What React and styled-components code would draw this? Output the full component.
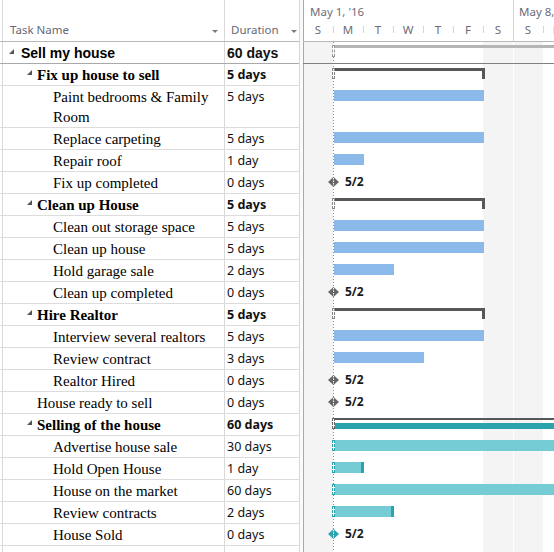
import React from "react";
import styled, { createGlobalStyle, css } from "styled-components";

const DAY = 30;
const MONDAY = 30; // x of Mon May 2 inside the chart

const tasks = [
  { name: "Sell my house", dur: "60 days", level: 0, kind: "project" },
  { name: "Fix up house to sell", dur: "5 days", level: 1, kind: "summary", days: 5 },
  { name: "Paint bedrooms & Family Room", dur: "5 days", level: 2, kind: "task", days: 5, tall: true },
  { name: "Replace carpeting", dur: "5 days", level: 2, kind: "task", days: 5 },
  { name: "Repair roof", dur: "1 day", level: 2, kind: "task", days: 1 },
  { name: "Fix up completed", dur: "0 days", level: 2, kind: "milestone" },
  { name: "Clean up House", dur: "5 days", level: 1, kind: "summary", days: 5 },
  { name: "Clean out storage space", dur: "5 days", level: 2, kind: "task", days: 5 },
  { name: "Clean up house", dur: "5 days", level: 2, kind: "task", days: 5 },
  { name: "Hold garage sale", dur: "2 days", level: 2, kind: "task", days: 2 },
  { name: "Clean up completed", dur: "0 days", level: 2, kind: "milestone" },
  { name: "Hire Realtor", dur: "5 days", level: 1, kind: "summary", days: 5 },
  { name: "Interview several realtors", dur: "5 days", level: 2, kind: "task", days: 5 },
  { name: "Review contract", dur: "3 days", level: 2, kind: "task", days: 3 },
  { name: "Realtor Hired", dur: "0 days", level: 2, kind: "milestone" },
  { name: "House ready to sell", dur: "0 days", level: 1, kind: "milestone" },
  { name: "Selling of the house", dur: "60 days", level: 1, kind: "summary", days: 60, critical: true },
  { name: "Advertise house sale", dur: "30 days", level: 2, kind: "task", days: 30, critical: true },
  { name: "Hold Open House", dur: "1 day", level: 2, kind: "task", days: 1, critical: true },
  { name: "House on the market", dur: "60 days", level: 2, kind: "task", days: 60, critical: true },
  { name: "Review contracts", dur: "2 days", level: 2, kind: "task", days: 2, critical: true },
  { name: "House Sold", dur: "0 days", level: 2, kind: "milestone", critical: true },
];

const days = ["S", "M", "T", "W", "T", "F", "S", "S", "M"];

// work days -> calendar width (weekends skipped)
const spanWidth = (d) => (d + 2 * Math.floor((d - 1) / 5)) * DAY;

const GlobalStyle = createGlobalStyle`
  html, body {
    margin: 0;
    padding: 0;
    background: #fff;
  }
  body {
    overflow: hidden;
  }
`;

const Frame = styled.div`
  display: flex;
  width: 554px;
  height: 552px;
  overflow: hidden;
  background: #fff;
`;

/* ---------- sheet (left table) ---------- */

const Sheet = styled.div`
  flex: none;
  width: 300px;
  box-sizing: border-box;
  border-right: 1px solid #d6d6d6;
`;

const SheetHeader = styled.div`
  display: flex;
  height: 42px;
  box-sizing: border-box;
  border-bottom: 1px solid #b8b8b8;
`;

const RowHead = styled.div`
  flex: none;
  width: 3px;
  box-sizing: border-box;
  border-right: 1px solid #d9d9d9;
`;

const HeadCell = styled.div`
  display: flex;
  align-items: flex-end;
  box-sizing: border-box;
  width: ${(p) => p.$width}px;
  flex: none;
  padding: 0 ${(p) => p.$padRight}px 3px ${(p) => p.$padLeft}px;
  border-right: ${(p) => (p.$last ? "none" : "1px solid #d9d9d9")};
  font-family: "Noto Sans", sans-serif;
  font-size: 11.5px;
  line-height: 16px;
  color: #5f6a78;
`;

const DropArrow = styled.span`
  margin-left: auto;
  margin-bottom: 5px;
  width: 0;
  height: 0;
  border-left: 3px solid transparent;
  border-right: 3px solid transparent;
  border-top: 3px solid #7a7a7a;
`;

const Row = styled.div`
  display: flex;
  box-sizing: border-box;
  height: ${(p) => (p.$tall ? 42 : 22)}px;
  border-bottom: 1px solid ${(p) => (p.$strong ? "#a9a9a9" : "#dcdcdc")};
`;

const NameCell = styled.div`
  display: flex;
  align-items: flex-start;
  flex: none;
  width: 222px;
  box-sizing: border-box;
  padding: 1px 4px 0 ${(p) => p.$indent}px;
  border-right: 1px solid #d9d9d9;
  color: #000;
  line-height: 20px;
  ${(p) =>
    p.$project
      ? css`
          font-family: "Liberation Sans", Arial, sans-serif;
          font-weight: bold;
          font-size: 14px;
        `
      : css`
          font-family: "Liberation Serif", "Times New Roman", serif;
          font-weight: ${p.$bold ? "bold" : "normal"};
          font-size: 15px;
        `}
`;

const Toggle = styled.span`
  flex: none;
  width: ${(p) => p.$width}px;
  height: 20px;

  svg {
    display: block;
    margin-top: ${(p) => p.$top}px;
  }
`;

const DurCell = styled.div`
  flex: 1;
  box-sizing: border-box;
  padding: 1px 0 0 2px;
  line-height: 20px;
  color: #111;
  ${(p) =>
    p.$project
      ? css`
          font-family: "Liberation Sans", Arial, sans-serif;
          font-weight: bold;
          font-size: 14px;
        `
      : css`
          font-family: "Noto Sans", sans-serif;
          font-weight: ${p.$bold ? "bold" : "normal"};
          font-size: 12.5px;
        `}
`;

const Splitter = styled.div`
  flex: none;
  width: 3px;
  background: #fafafa;
`;

/* ---------- chart (right) ---------- */

const Chart = styled.div`
  position: relative;
  flex: 1;
  overflow: hidden;
  box-shadow: inset 1px 0 0 #a9a9a9;
`;

const ChartHeader = styled.div`
  height: 42px;
  box-sizing: border-box;
  border-bottom: 1px solid #b8b8b8;
  font-family: "Noto Sans", sans-serif;
  font-size: 11.5px;
  color: #6e6c78;
`;

const WeekTier = styled.div`
  display: flex;
  height: 21px;
`;

const WeekCell = styled.div`
  flex: none;
  width: ${(p) => p.$width}px;
  box-sizing: border-box;
  padding: 3px 0 0 ${(p) => (p.$first ? 7 : 5)}px;
  line-height: 18px;
  white-space: nowrap;
  border-left: ${(p) => (p.$first ? "none" : "1px solid #d6d6d6")};
`;

const DayTier = styled.div`
  display: flex;
  height: 20px;
`;

const DayCell = styled.div`
  position: relative;
  flex: none;
  width: ${DAY}px;
  text-align: center;
  line-height: 16px;
  padding-top: 1px;

  &::before {
    content: "";
    position: absolute;
    left: 0;
    top: ${(p) => (p.$weekStart ? -21 : 5)}px;
    height: ${(p) => (p.$weekStart ? 41 : 7)}px;
    width: 1px;
    background: ${(p) => (p.$first ? "transparent" : "#d6d6d6")};
  }
`;

const ChartBody = styled.div`
  position: relative;
  background: linear-gradient(
    to right,
    #f4f4f4 0 30px,
    #fff 30px 180px,
    #f4f4f4 180px 210px,
    #fff 210px 211px,
    #f4f4f4 211px 240px,
    #fff 240px
  );
  box-shadow: inset 1px 0 0 #a9a9a9;
  min-height: 520px;

  &::before {
    content: "";
    position: absolute;
    left: ${MONDAY}px;
    top: 0;
    bottom: 0;
    width: 1px;
    background: repeating-linear-gradient(to bottom, #8c8c8c 0 1px, transparent 1px 3px);
  }
`;

const ChartRow = styled.div`
  position: relative;
  box-sizing: border-box;
  height: ${(p) => (p.$tall ? 42 : 22)}px;
  border-bottom: ${(p) => (p.$strong ? "1px solid #808080" : "none")};
`;

const Bar = styled.div`
  position: absolute;
  top: 4px;
  height: 11px;
  background: ${(p) => (p.$critical ? "#75ccd4" : "#8ab9ea")};
  ${(p) =>
    p.$critical &&
    css`
      box-shadow: inset -3px 0 0 #2aa3ad;
    `}
`;

const StartMark = styled.div`
  position: absolute;
  left: ${MONDAY - 1}px;
  top: ${(p) => p.$top}px;
  width: 3px;
  height: ${(p) => p.$height}px;
  box-sizing: border-box;
  border: 1px dashed ${(p) => p.$color};
  background: #fff;
`;

const SummaryLine = styled.div`
  position: absolute;
  left: ${MONDAY}px;
  top: 4px;
  height: ${(p) => (p.$critical ? 2 : 3)}px;
  background: #575757;
`;

const SummaryEnd = styled.div`
  position: absolute;
  top: 4px;
  width: 3px;
  height: 11px;
  background: #575757;
`;

const ProjectLine = styled.div`
  position: absolute;
  left: ${MONDAY + 1}px;
  right: 0;
  top: 3px;
  height: 3px;
  background: #b5b5b5;
`;

const CriticalBand = styled.div`
  position: absolute;
  left: ${MONDAY + 2}px;
  right: 0;
  top: 9px;
  height: 6px;
  background: #2aa3ad;
`;

const Diamond = styled.svg`
  position: absolute;
  left: ${MONDAY - 5}px;
  top: 5px;
`;

const MilestoneLabel = styled.span`
  position: absolute;
  left: 42px;
  top: 1px;
  font-family: "Noto Sans", sans-serif;
  font-weight: bold;
  font-size: 12px;
  line-height: 18px;
  color: #1a1a1a;
`;

function Expander({ level }) {
  return (
    <Toggle $width={level === 0 ? 12 : 10} $top={level === 0 ? 6 : 5}>
      <svg width="5" height="5" viewBox="0 0 5 5">
        <polygon points="5,0 5,5 0,5" fill="#555" />
      </svg>
    </Toggle>
  );
}

function Milestone({ critical }) {
  const fill = critical ? "#2aa3ad" : "#666";
  return (
    <>
      <Diamond width="11" height="10" viewBox="0 0 11 10">
        <polygon points="5.5,0 11,5 5.5,10 0,5" fill={fill} />
        <line x1="5.5" y1="1" x2="5.5" y2="9" stroke="#fff" strokeWidth="1" strokeDasharray="1.5 1" />
      </Diamond>
      <MilestoneLabel>5/2</MilestoneLabel>
    </>
  );
}

function GanttBar({ task }) {
  const { kind, days: d, critical } = task;
  if (kind === "project") {
    return (
      <>
        <ProjectLine />
        <StartMark $top={3} $height={12} $color="#9a9a9a" />
      </>
    );
  }
  if (kind === "milestone") return <Milestone critical={critical} />;
  if (kind === "summary") {
    const w = spanWidth(d) + 2;
    return (
      <>
        <SummaryLine $critical={critical} style={{ width: critical ? 400 : w }} />
        {critical ? <CriticalBand /> : <SummaryEnd style={{ left: MONDAY + w - 3 }} />}
        <StartMark $top={4} $height={11} $color={critical ? "#666" : "#888"} />
      </>
    );
  }
  return (
    <>
      <Bar $critical={critical} style={{ left: MONDAY + 1, width: spanWidth(d) }} />
      {critical && <StartMark $top={4} $height={11} $color="#2aa3ad" />}
    </>
  );
}

export default function App() {
  return (
    <Frame>
      <GlobalStyle />
      <Sheet>
        <SheetHeader>
          <RowHead />
          <HeadCell $width={222} $padLeft={7} $padRight={6}>
            Task Name
            <DropArrow />
          </HeadCell>
          <HeadCell $width={74} $padLeft={6} $padRight={2} $last>
            Duration
            <DropArrow />
          </HeadCell>
        </SheetHeader>
        {tasks.map((t, i) => {
          const isSummary = t.kind === "summary" || t.kind === "project";
          const indent = t.level === 0 ? 6 : t.level === 1 ? (isSummary ? 24 : 34) : 50;
          return (
            <Row key={i} $tall={t.tall} $strong={t.kind === "project"}>
              <RowHead />
              <NameCell $indent={indent} $bold={isSummary} $project={t.kind === "project"}>
                {isSummary && <Expander level={t.level} />}
                <span>{t.name}</span>
              </NameCell>
              <DurCell $bold={isSummary} $project={t.kind === "project"}>
                {t.dur}
              </DurCell>
            </Row>
          );
        })}
        <Row>
          <RowHead />
          <NameCell $indent={50} />
          <DurCell />
        </Row>
      </Sheet>
      <Splitter />
      <Chart>
        <ChartHeader>
          <WeekTier>
            <WeekCell $width={210} $first>
              May 1, '16
            </WeekCell>
            <WeekCell $width={210}>May 8, '16</WeekCell>
          </WeekTier>
          <DayTier>
            {days.map((d, i) => (
              <DayCell key={i} $first={i === 0} $weekStart={i === 7}>
                {d}
              </DayCell>
            ))}
          </DayTier>
        </ChartHeader>
        <ChartBody>
          {tasks.map((t, i) => (
            <ChartRow key={i} $tall={t.tall} $strong={t.kind === "project"}>
              <GanttBar task={t} />
            </ChartRow>
          ))}
        </ChartBody>
      </Chart>
    </Frame>
  );
}
